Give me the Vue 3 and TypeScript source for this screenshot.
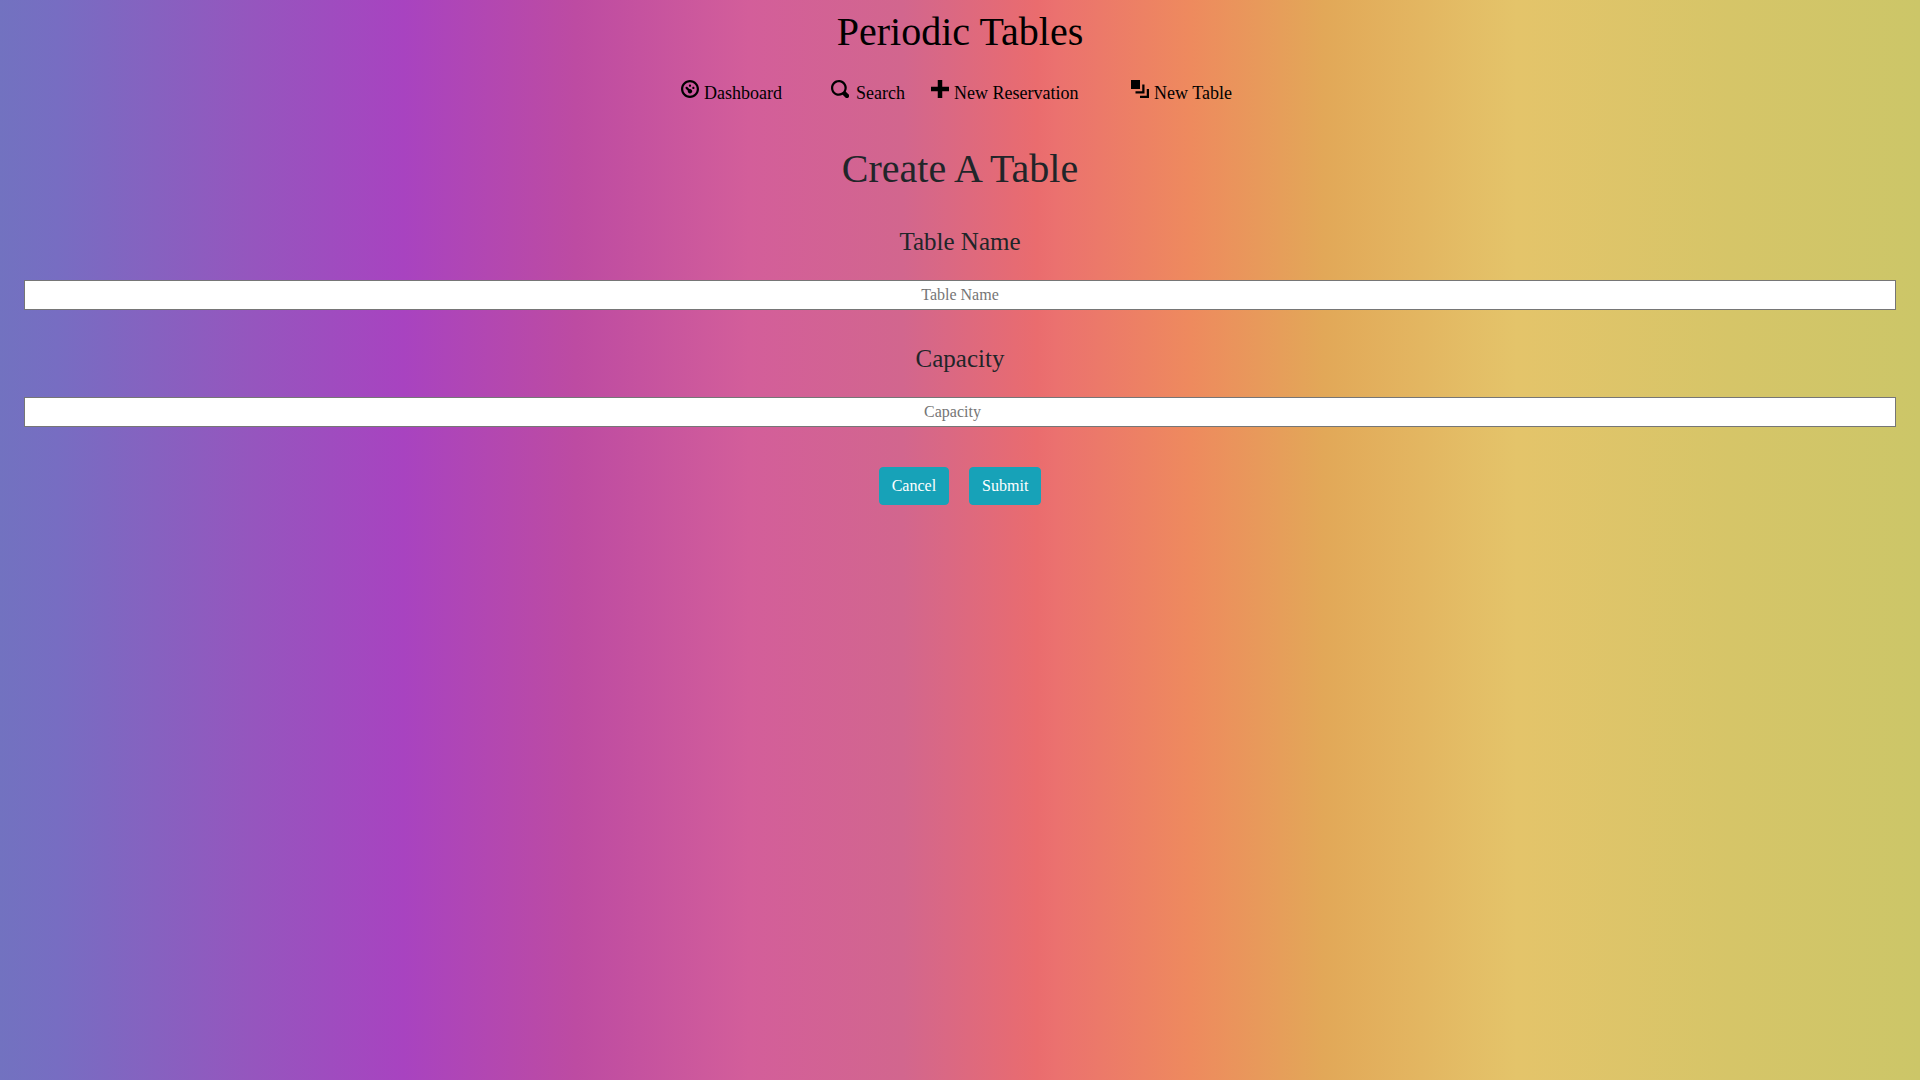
<script setup lang="ts">
import { ref } from 'vue'

interface NavItem {
  label: string
  path: string
}

const navItems: NavItem[] = [
  {
    label: 'Dashboard',
    path: 'M4 0c-2.2 0-4 1.8-4 4s1.8 4 4 4 4-1.8 4-4-1.8-4-4-4zm0 1c1.66 0 3 1.34 3 3s-1.34 3-3 3-3-1.34-3-3 1.34-3 3-3zm0 1c-.28 0-.5.22-.5.5s.22.5.5.5.5-.22.5-.5-.22-.5-.5-.5zm-1.66 1a.5.5 0 0 0-.19.84l.91.91c-.02.08-.06.16-.06.25 0 .55.45 1 1 1s1-.45 1-1-.45-1-1-1c-.09 0-.17.04-.25.06l-.91-.91a.5.5 0 0 0-.5-.15zm3.16 0c-.28 0-.5.22-.5.5s.22.5.5.5.5-.22.5-.5-.22-.5-.5-.5z',
  },
  {
    label: 'Search',
    path: 'M3.5 0c-1.93 0-3.5 1.57-3.5 3.5s1.57 3.5 3.5 3.5c.59 0 1.17-.14 1.66-.41a1 1 0 0 0 .13.13l1 1a1.02 1.02 0 1 0 1.44-1.44l-1-1a1 1 0 0 0-.16-.13c.27-.49.44-1.06.44-1.66 0-1.93-1.55-3.5-3.5-3.5zm0 1c1.39 0 2.5 1.11 2.5 2.5 0 .66-.24 1.27-.66 1.72l-.03.03a1 1 0 0 0-.13.13c-.44.4-1.04.63-1.69.63-1.39 0-2.5-1.11-2.5-2.5s1.11-2.5 2.5-2.5z',
  },
  {
    label: 'New Reservation',
    path: 'M3 0v3h-3v2h3v3h2v-3h3v-2h-3v-3h-2z',
  },
  {
    label: 'New Table',
    path: 'M0 0v4h4v-4h-4zm5 2v3h-3v1h4v-4h-1zm2 2v3h-3v1h4v-4h-1z',
  },
]

const tableName = ref('')
const capacity = ref<number | ''>('')

function reset(): void {
  tableName.value = ''
  capacity.value = ''
}
</script>

<template>
  <div class="page">
    <header>
      <a class="brand" href="#">Periodic Tables</a>
      <nav>
        <a v-for="item in navItems" :key="item.label" href="#">
          <svg viewBox="0 0 8 8" aria-hidden="true"><path :d="item.path" /></svg>
          <span>{{ item.label }}</span>
        </a>
      </nav>
    </header>
    <main>
      <h1>Create A Table</h1>
      <form @submit.prevent>
        <label for="table-name">Table Name</label>
        <input id="table-name" v-model="tableName" type="text" placeholder="Table Name" />
        <label for="capacity">Capacity</label>
        <input id="capacity" v-model="capacity" type="number" min="1" placeholder="Capacity" />
        <div class="actions">
          <button type="button" @click="reset">Cancel</button>
          <button type="submit">Submit</button>
        </div>
      </form>
    </main>
  </div>
</template>

<style>
body {
  margin: 0;
}
</style>

<style scoped>
.page {
  box-sizing: border-box;
  min-height: 100vh;
  padding: 8px 24px;
  color: #212529;
  font-family: 'Liberation Serif', 'Times New Roman', serif;
  background: linear-gradient(
    to right,
    #7272c0 0%,
    #776dc2 3%,
    #9556be 13%,
    #a843c0 21%,
    #bd4ba2 30%,
    #d35e9a 39%,
    #d2668e 47%,
    #ea6c6e 54%,
    #eb716f 55%,
    #ee8a5e 62%,
    #e2a858 69%,
    #e4c46a 79%,
    #d6c568 90%,
    #ccc668 100%
  );
}

header {
  display: flex;
  flex-direction: column;
  align-items: center;
}

a {
  color: #000;
  text-decoration: none;
}

.brand {
  font-size: 40px;
  line-height: 48px;
}

nav {
  display: grid;
  grid-template-columns: 150px 100px 200px 108px;
  margin-top: 24px;
}

nav a {
  display: flex;
  align-items: flex-start;
  gap: 5px;
  font-size: 18px;
  line-height: 26px;
  white-space: nowrap;
}

nav a:nth-child(2) {
  gap: 7px;
}

nav svg {
  width: 18px;
  height: 18px;
}

h1 {
  margin: 39px 0 30px;
  font-size: 40px;
  font-weight: 400;
  line-height: 48px;
  text-align: center;
}

form {
  display: flex;
  flex-direction: column;
}

label {
  margin-bottom: 19px;
  font-size: 25px;
  line-height: 38px;
  text-align: center;
}

input {
  box-sizing: border-box;
  width: 100%;
  height: 30px;
  margin: 0 0 30px;
  padding: 1px 2px;
  border: 1px solid #767676;
  font-family: inherit;
  font-size: 16px;
  text-align: center;
  background: #fff;
}

input::placeholder {
  color: #757575;
}

.actions {
  display: flex;
  justify-content: center;
  gap: 20px;
  margin-top: 10px;
}

button {
  height: 38px;
  padding: 0 12px;
  border: 1px solid #17a2b8;
  border-radius: 4px;
  color: #fff;
  font-family: inherit;
  font-size: 16px;
  background: #17a2b8;
}
</style>
